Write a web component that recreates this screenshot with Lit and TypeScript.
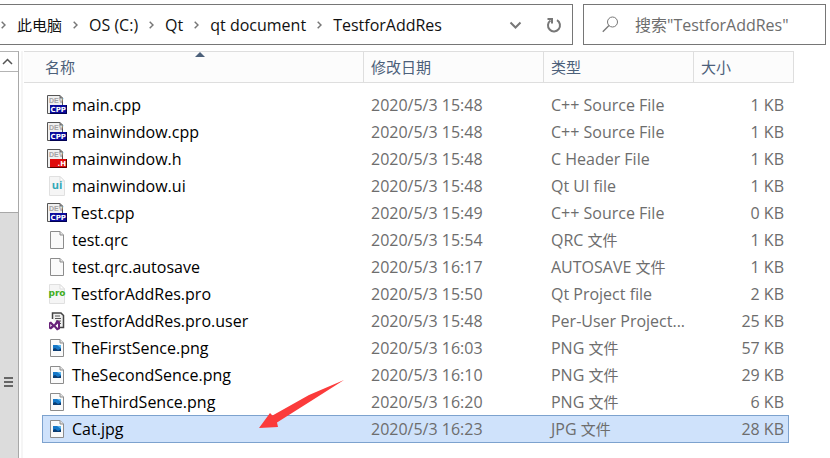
import { LitElement, html, svg, css } from "lit";
import { customElement, state } from "lit/decorators.js";
import { classMap } from "lit/directives/class-map.js";

type Kind = "cpp" | "h" | "ui" | "blank" | "pro" | "vs" | "image";
interface FileRow { name: string; date: string; type: string; size: string; kind: Kind; }

const FILES: FileRow[] = [
  { name: "main.cpp", date: "2020/5/3 15:48", type: "C++ Source File", size: "1 KB", kind: "cpp" },
  { name: "mainwindow.cpp", date: "2020/5/3 15:48", type: "C++ Source File", size: "1 KB", kind: "cpp" },
  { name: "mainwindow.h", date: "2020/5/3 15:48", type: "C Header File", size: "1 KB", kind: "h" },
  { name: "mainwindow.ui", date: "2020/5/3 15:48", type: "Qt UI file", size: "1 KB", kind: "ui" },
  { name: "Test.cpp", date: "2020/5/3 15:49", type: "C++ Source File", size: "0 KB", kind: "cpp" },
  { name: "test.qrc", date: "2020/5/3 15:54", type: "QRC 文件", size: "1 KB", kind: "blank" },
  { name: "test.qrc.autosave", date: "2020/5/3 16:17", type: "AUTOSAVE 文件", size: "1 KB", kind: "blank" },
  { name: "TestforAddRes.pro", date: "2020/5/3 15:50", type: "Qt Project file", size: "2 KB", kind: "pro" },
  { name: "TestforAddRes.pro.user", date: "2020/5/3 15:48", type: "Per-User Project...", size: "25 KB", kind: "vs" },
  { name: "TheFirstSence.png", date: "2020/5/3 16:03", type: "PNG 文件", size: "57 KB", kind: "image" },
  { name: "TheSecondSence.png", date: "2020/5/3 16:10", type: "PNG 文件", size: "29 KB", kind: "image" },
  { name: "TheThirdSence.png", date: "2020/5/3 16:20", type: "PNG 文件", size: "6 KB", kind: "image" },
  { name: "Cat.jpg", date: "2020/5/3 16:23", type: "JPG 文件", size: "28 KB", kind: "image" },
];

const CRUMBS = ["此电脑", "OS (C:)", "Qt", "qt document", "TestforAddRes"];

/* Han characters are set one pixel smaller than the Latin text beside them. */
const mixed = (text: string) =>
  text.split(/([\u4e00-\u9fff]+)/).filter(Boolean).map((part) =>
    /[\u4e00-\u9fff]/.test(part) ? html`<span class="han">${part}</span>` : part);

const sheet = svg`
  <path d="M3.500 1.500H13L16.500 5V18.500H3.500Z" fill="#fafafa" stroke="#8c8c8c"/>
  <path d="M13 1.500V5H16.500" fill="#e4e4e4" stroke="#8c8c8c"/>`;

const source = (label: string, fill: string, dark: string) => svg`
  <path d="M.5 .5H13L15.500 3V18.500H.500Z" fill="#f0f0f0" stroke="#555"/>
  <path d="M13 .5V3H15.500" fill="#999" stroke="#666"/>
  <text class="dev" x="2" y="8">DEV</text>
  <path d="M3 10H20V19H3Z" fill=${fill}/>
  <path d="M3 18.500H19.500V10" fill="none" stroke=${dark}/>
  <text class="tag" x="19" y="17" text-anchor="end">${label}</text>`;

const softSheet = svg`
  <path d="M2.500 .5H13L17.500 5V19.500H2.500Z" fill="#f5f5f5" stroke="#e0e0e0"/>
  <path d="M13 .5L17.500 5H13Z" fill="#fff" stroke="#ddd"/>`;

const ICONS = {
  cpp: source("CPP", "#0a0a9c", "#000050"),
  h: source(".H", "#e00b0b", "#5c0000"),
  ui: svg`${softSheet}<text class="ui" x="10" y="13" text-anchor="middle">ui</text>`,
  blank: sheet,
  pro: svg`${softSheet}<text class="pro" x="10" y="12" text-anchor="middle">pro</text>`,
  vs: svg`
    <path d="M5.500 8V2H14L16.500 4.500V16.500H13" fill="#f0f0f0" stroke="#444" stroke-width="1.500"/>
    <path d="M8 5H13M8 7.500H14M9 10H14M12 12.500H14" stroke="#555"/>
    <path d="M2 11.500L4 10.500L7 13.500L10 9L13 10.500V18L10 19.500L7 16L4 18.500L2 17.500Z" fill="#68217a"/>
    <path d="M3.300 13V16L5 14.500ZM8.500 14.700L11 12.500V17Z" fill="#fff"/>`,
  image: svg`${sheet}
    <path d="M6 7H14V13H6Z" fill="#1678c8"/>
    <path d="M6 11L8 10L11 12L14 10.500V13H6Z" fill="#0b3c72"/>
    <path d="M10 7H14V10Z" fill="#5db8ef"/>`,
};

@customElement("app-root")
export class AppRoot extends LitElement {
  @state() private selected = "Cat.jpg";

  static styles = css`
    :host {
      display: flex; flex-direction: column; box-sizing: border-box;
      min-height: 100vh; padding-top: 4px; position: relative; overflow: hidden;
      background: #fff; color: #000;
      font: 16px/20px "Open Sans", "Noto Sans CJK SC", sans-serif;
    }
    * { box-sizing: border-box; }
    button { font: inherit; color: inherit; background: none; border: 0; padding: 0; margin: 0; }
    svg { display: block; flex: none; fill: none; }
    .han { font-size: 15px; }
    .top { display: flex; gap: 10px; padding-right: 4px; height: 41px; }
    .address {
      flex: 1; min-width: 0; display: flex; align-items: center;
      border: 1px solid #767676; border-left: 0; padding-right: 10px;
    }
    .crumbs { flex: 1; display: flex; align-items: center; list-style: none; margin: 0; padding: 0; white-space: nowrap; }
    .crumbs li { display: flex; align-items: center; }
    .crumbs svg { margin: 0 11px; }
    .crumbs li:first-child svg { margin-left: 1px; }
    .crumbs a { color: #111; text-decoration: none; }
    .tools { display: flex; align-items: center; gap: 24px; }
    .search {
      flex: 0 0 243px; min-width: 0; display: flex; align-items: center; gap: 16px;
      border: 1px solid #767676; padding: 0 8px 0 18px;
    }
    .search input { flex: 1; min-width: 0; border: 0; outline: 0; padding: 0; font: inherit; background: none; }
    .search input::placeholder { color: #6d6d6d; opacity: 1; }
    .body { flex: 1; display: flex; padding-top: 6px; }
    .scroll { flex: 0 0 19px; display: flex; flex-direction: column; border-top: 1px solid #b4b4b4; border-right: 1px solid #a8a8a8; }
    .up { height: 20px; display: grid; place-items: center; border-bottom: 1px solid #b4b4b4; padding-right: 3px; }
    .track { flex: 1; display: flex; flex-direction: column; padding-top: 140px; }
    .thumb { flex: 1; background: #dcdcdc; border-top: 1px solid #a8a8a8; padding: 164px 0 0 4px; }
    .list { flex: 1; min-width: 0; padding-right: 36px; margin-left: 2px; border-left: 2px solid #f5f5f5; }
    table { width: 100%; table-layout: fixed; border-collapse: separate; border-spacing: 0; padding-left: 1px; }
    .gutter { width: 18px; } .date { width: 180px; } .type { width: 150px; } .size { width: 95px; } .end { width: 5px; }
    th {
      position: relative; height: 32px; padding: 0 0 0 7px; text-align: left; font-size: 15px; font-weight: 400; color: #4c607a;
      background: #fcfcfc; border: 1px solid #dedede; border-left: 0;
    }
    th.name { padding-left: 21px; }
    .sort { position: absolute; top: 0; left: 50%; margin-left: 2px; }
    .space td { height: 8px; }
    td { height: 27px; padding: 0; color: #6d6d6d; white-space: nowrap; }
    td.d, td.t { padding-left: 7px; }
    td.s { text-align: right; padding-right: 5px; }
    .file { display: flex; align-items: center; gap: 5px; padding-left: 5px; color: #000; }
    .picked td { height: 28px; }
    .picked .n, .picked .d, .picked .t, .picked .s { background: #cfe2fb; border: solid #7da2ce; border-width: 1px 0; }
    .picked .n { border-left-width: 1px; }
    .picked .n .file { padding-left: 4px; }
    .picked .s { border-right-width: 1px; padding-right: 4px; }
    .dev { font: bold 7px "Liberation Sans", sans-serif; fill: #a4a4a4; }
    .tag { font: bold 7px "DejaVu Sans", sans-serif; fill: #fff; }
    .ui { font: bold 11px "Open Sans", sans-serif; fill: #31a8b8; }
    .pro { font: bold 9px "DejaVu Sans", sans-serif; fill: #3fae1d; }
    .arrow { position: absolute; left: 259px; top: 380px; pointer-events: none; }
  `;

  render() {
    return html`
      <div class="top">
        <div class="address">
          <ol class="crumbs">
            ${CRUMBS.map((c) => html`<li>
              <svg width="5" height="8" viewBox="0 0 5 8"><path d="M.7 .7L4 4L.7 7.300" stroke="#777" stroke-width="1.500"/></svg>
              <a href="#">${mixed(c)}</a></li>`)}
          </ol>
          <div class="tools">
            <button aria-label="历史记录"><svg width="13" height="9" viewBox="0 0 13 9"><path d="M1.500 2.500L6.500 7.500L11.500 2.500" stroke="#777" stroke-width="2"/></svg></button>
            <button aria-label="刷新"><svg width="16" height="16" viewBox="0 0 16 16"><path d="M11 3.200A6 6 0 1 1 4.500 3.500" stroke="#777" stroke-width="2"/><path d="M1.500 2H6V6.500" stroke="#777" stroke-width="2"/></svg></button>
          </div>
        </div>
        <label class="search">
          <svg width="17" height="17" viewBox="0 0 17 17"><circle cx="10.500" cy="6" r="5" stroke="#777"/><path d="M7 9.500L.8 15.700" stroke="#777" stroke-width="1.300"/></svg>
          <input type="text" aria-label="搜索" placeholder='搜索"TestforAddRes"' />
        </label>
      </div>
      <div class="body">
        <div class="scroll">
          <button class="up" aria-label="向上"><svg width="11" height="7" viewBox="0 0 11 7"><path d="M1 6L5.500 1.500L10 6" stroke="#555" stroke-width="1.500"/></svg></button>
          <div class="track"><div class="thumb">
            <svg width="9" height="10" viewBox="0 0 9 10"><path d="M0 1H9M0 5H9M0 9H9" stroke="#666" stroke-width="2"/></svg>
          </div></div>
        </div>
        <div class="list">
          <table>
            <colgroup><col class="gutter" /><col /><col class="date" /><col class="type" /><col class="size" /><col class="end" /></colgroup>
            <thead><tr>
              <th class="name" colspan="2"><button>名称</button>
                <svg class="sort" width="10" height="5" viewBox="0 0 10 5"><path d="M0 5L5 0L10 5Z" fill="#4c607a"/></svg></th>
              <th><button>修改日期</button></th>
              <th><button>类型</button></th>
              <th colspan="2"><button>大小</button></th>
            </tr></thead>
            <tbody>
              <tr class="space"><td colspan="6"></td></tr>
              ${FILES.map((f) => html`<tr class=${classMap({ picked: f.name === this.selected })} @click=${() => (this.selected = f.name)}>
                <td></td>
                <td class="n"><div class="file"><svg width="20" height="20" viewBox="0 0 20 20">${ICONS[f.kind]}</svg><span>${f.name}</span></div></td>
                <td class="d">${f.date}</td>
                <td class="t">${mixed(f.type)}</td>
                <td class="s">${f.size}</td>
                <td></td>
              </tr>`)}
            </tbody>
          </table>
        </div>
      </div>
      <svg class="arrow" width="86" height="49" viewBox="0 0 86 49"><path d="M0 48L11 33L13.500 35.500L50 15L85 0L52 21L18 42.500L19 47Z" fill="#fb3b3b"/></svg>
    `;
  }
}
